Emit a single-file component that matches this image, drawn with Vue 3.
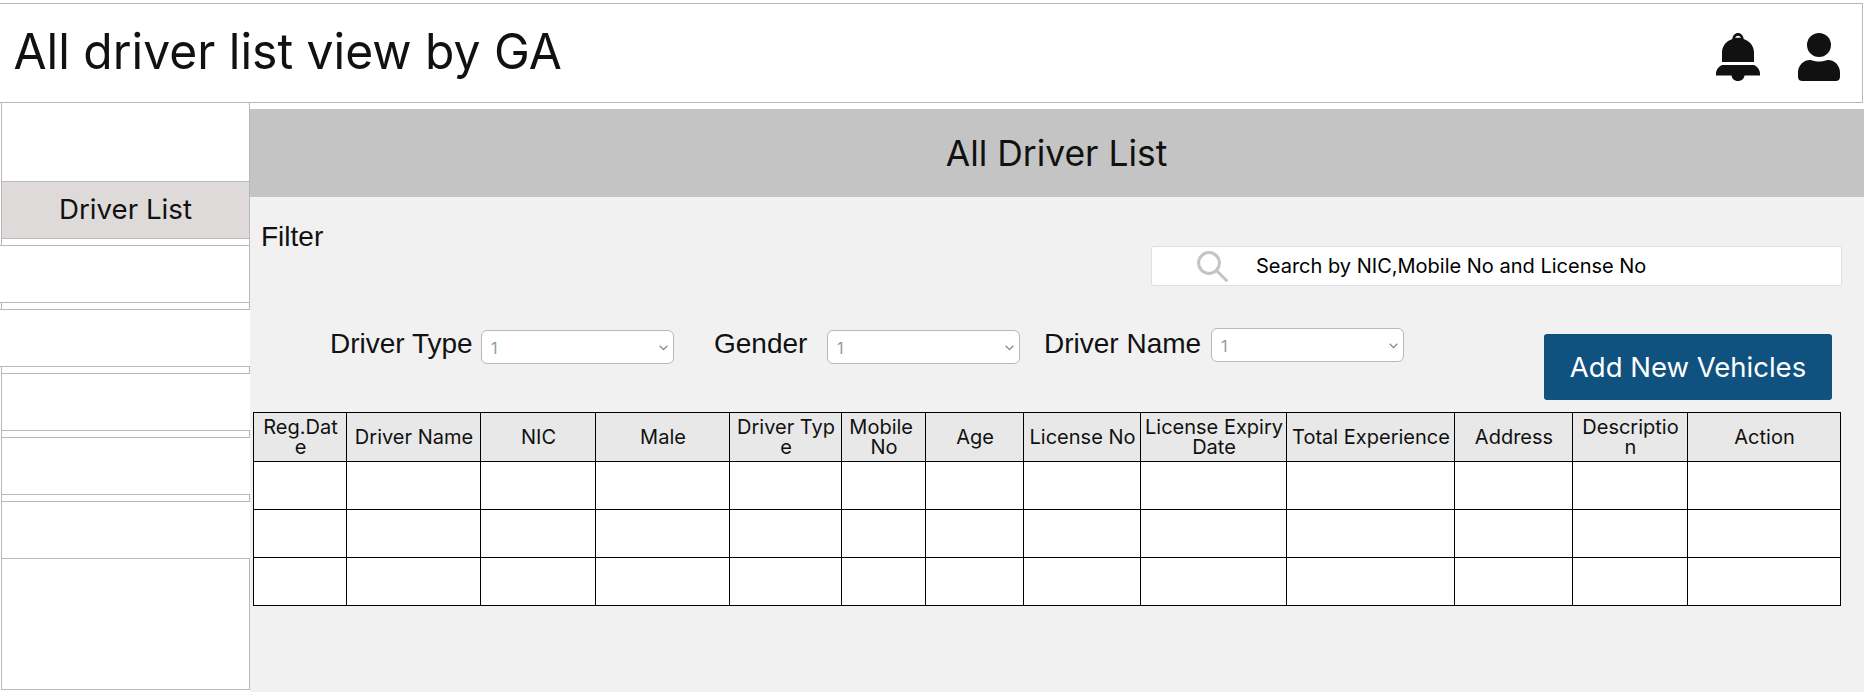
<script setup>
const menu = [
  { label: 'Driver List', kind: 'active' },
  { label: '', kind: 'open-left' },
  { label: '', kind: 'open-both' },
  { label: '', kind: 'open-right' },
  { label: '', kind: 'open-right' },
  { label: '', kind: 'open-right' },
]
const filters = [
  { label: 'Driver Type', kind: 'type' },
  { label: 'Gender', kind: 'gender' },
  { label: 'Driver Name', kind: 'name' },
]
const columns = [
  { label: 'Reg.Dat\ne', width: 93 },
  { label: 'Driver Name', width: 134 },
  { label: 'NIC', width: 115 },
  { label: 'Male', width: 134 },
  { label: 'Driver Typ\ne', width: 112 },
  { label: 'Mobile \nNo', width: 84 },
  { label: 'Age', width: 98 },
  { label: 'License No', width: 117 },
  { label: 'License Expiry\nDate', width: 146 },
  { label: 'Total Experience', width: 168 },
  { label: 'Address', width: 118 },
  { label: 'Descriptio\nn', width: 115 },
  { label: 'Action', width: 153 },
]
const gridColumns = columns.map((c) => c.width + 'px').join(' ')
</script>

<template>
  <div class="page">
    <header class="topbar">
      <h1>All driver list view by GA</h1>
      <div class="icons">
        <svg class="bell" width="44" height="48" viewBox="0 0 44 48">
          <path fill-rule="evenodd" d="M16.3 6C16.7 2.5 19 0 22 0s5.300 2.500 5.700 6C33.700 8 38 13 38 19.500V29H6V19.500C6 13 10.300 8 16.300 6zM19.200 5.100c1.800-.4 3.800-.4 5.600 0C24.300 3.600 23.300 2.800 22 2.800s-2.300.8-2.800 2.300z" />
          <path d="M6 32h32c3.500 1.500 6 5 6 8.500V42.500H28.500C28 45.800 25.500 48 22 48s-6-2.200-6.500-5.500H0V40.500C0 37 2.500 33.500 6 32z" />
        </svg>
        <svg class="user" width="42" height="48" viewBox="0 0 42 48">
          <circle cx="21" cy="12" r="12" />
          <path d="M12 27c2 0 3.500 1.500 9 1.500S28 27 30 27c7 0 12 6 12 12.500V43.500C42 46.500 40.500 48 37.500 48H4.500C1.500 48 0 46.500 0 43.500V39.500C0 33 5 27 12 27z" />
        </svg>
      </div>
    </header>

    <div class="body">
      <aside class="sidebar">
        <div class="side-head"></div>
        <template v-for="(item, i) in menu" :key="i">
          <div class="item" :class="item.kind">{{ item.label }}</div>
          <div v-if="i < menu.length - 1" class="gap"></div>
        </template>
        <div class="side-foot"></div>
      </aside>

      <main class="content">
        <div class="banner">All Driver List</div>
        <div class="panel">
          <div class="top-row">
            <span class="filter-title">Filter</span>
            <div class="search">
              <svg width="32" height="32" viewBox="0 0 32 32">
                <circle cx="12" cy="12" r="10.400" />
                <path d="M19.500 19.500L30.300 30.300" />
              </svg>
              <span>Search by NIC,Mobile No and License No</span>
            </div>
          </div>
          <div class="filter-row">
            <div v-for="f in filters" :key="f.kind" class="field" :class="f.kind">
              <span class="label">{{ f.label }}</span>
              <div class="select">
                <span>1</span>
                <svg width="9" height="6" viewBox="0 0 9 6"><path d="M.7 .8L4.500 4.600L8.300 .8" /></svg>
              </div>
            </div>
            <button class="add">Add New Vehicles</button>
          </div>
          <div class="table">
            <div class="tr head" :style="{ gridTemplateColumns: gridColumns }">
              <div v-for="c in columns" :key="c.label" class="td">
                <span>{{ c.label }}</span>
              </div>
            </div>
            <div v-for="r in 3" :key="r" class="tr" :style="{ gridTemplateColumns: gridColumns }">
              <div v-for="c in columns" :key="c.label" class="td"></div>
            </div>
          </div>
        </div>
      </main>
    </div>
  </div>
</template>

<style>
body { margin: 0; background: #fff; }
</style>

<style scoped>
* { box-sizing: border-box; }
.page {
  width: 1864px;
  height: 692px;
  padding-top: 3px;
  overflow: hidden;
  background: #fff;
  color: #111;
  font-family: Inter, "Liberation Sans", sans-serif;
}
.topbar {
  display: flex;
  justify-content: space-between;
  width: 1863px;
  height: 100px;
  padding-left: 13.500px;
  border: 1px solid #b8b8b8;
  border-left: 0;
}
h1 {
  margin: 0;
  font-size: 48px;
  font-weight: 400;
  line-height: 95px;
  white-space: nowrap;
  transform: scaleY(1.03);
}
.icons { display: flex; gap: 38px; padding: 29px 22px 0 0; }
.icons svg { fill: #111; }
.body { display: grid; grid-template-columns: 250px 1614px; height: 589px; }
.sidebar { display: flex; flex-direction: column; height: 589px; }
.sidebar > div { flex: none; border: 0 solid #b8b8b8; margin-left: 1px; }
.side-head { height: 78px; border-width: 0 1px 0 1px !important; }
.item { height: 58px; border-width: 1px 0 !important; }
.item.active {
  background: #dedad9;
  border-width: 1px !important;
  font-size: 27.700px;
  font-weight: 400;
  line-height: 54px;
  text-align: center;
}
.item.open-left { margin-left: 0 !important; border-right-width: 1px !important; }
.item.open-both { margin-left: 0 !important; }
.item.open-right { border-left-width: 1px !important; }
.gap { height: 6px; border-width: 0 1px !important; }
.side-foot { height: 131px; border-width: 0 1px 1px !important; }
.content { padding-top: 6px; }
.banner {
  height: 88px;
  background: #c4c4c4;
  font-size: 35.400px;
  font-weight: 400;
  line-height: 90px;
  text-align: center;
  padding-right: 1px;
}
.panel { height: 495px; padding-left: 3px; background: #f1f1f1; }
.top-row { display: flex; justify-content: space-between; padding: 0 22px 0 8px; height: 131px; }
.filter-title { margin-top: 24px; font: 28px/32px "Liberation Sans", sans-serif; }
.search {
  display: flex;
  align-items: center;
  width: 691px;
  height: 40px;
  margin-top: 49px;
  padding-left: 45px;
  background: #fff;
  border: 1px solid #dcdfe6;
  border-radius: 3px;
  color: #000;
  font-size: 20px;
  white-space: nowrap;
}
.search svg { flex: none; margin: 2px 27px 0 0; fill: none; stroke: #c3c4c8; stroke-width: 3; }
.filter-row { display: flex; height: 84px; padding-left: 77px; align-items: flex-start; }
.field { display: flex; flex: none; }
.label { font: 28px/32px "Liberation Sans", sans-serif; white-space: nowrap; }
.type .label { width: 151px; }
.gender { margin-left: 40px; }
.gender .label { width: 113px; }
.name { margin-left: 24px; }
.name .label { width: 167px; }
.select {
  display: flex;
  align-items: center;
  justify-content: space-between;
  width: 193px;
  height: 34px;
  margin-top: 2px;
  padding: 1px 5px 0 9px;
  background: #fff;
  border: 1px solid #b8b8b8;
  border-radius: 6px;
  color: #999;
  font-size: 16px;
}
.name .select { margin-top: 0; }
.select svg { fill: none; stroke: #888; stroke-width: 1.300; }
.add {
  width: 288px;
  height: 66px;
  margin: 6px 0 0 140px;
  padding: 0 0 1px;
  border: 0;
  border-radius: 3px;
  background: #0f527f;
  color: #fff;
  font: 400 27.500px Inter, sans-serif;
  white-space: nowrap;
}
.table { width: 1588px; border-top: 1px solid #000; border-left: 1px solid #000; background: #fff; }
.tr { display: grid; height: 48px; }
.head { height: 49px; background: #e8e8e8; }
.td {
  display: flex;
  align-items: center;
  justify-content: center;
  padding-left: 1px;
  border-right: 1px solid #000;
  border-bottom: 1px solid #000;
  font-size: 20px;
  line-height: 20px;
  text-align: center;
  white-space: pre;
}
.td span { margin-top: -1px; }
</style>
